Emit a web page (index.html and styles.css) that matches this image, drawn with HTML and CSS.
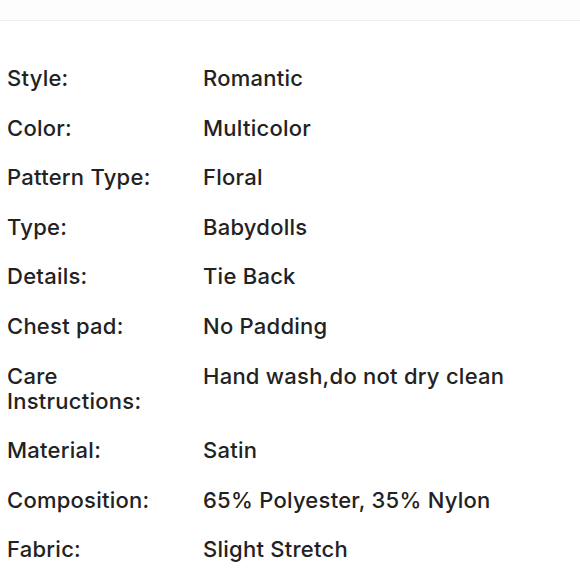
FILE: index.html
```html
<!DOCTYPE html>
<html>
<head>
<meta charset="utf-8">
<link rel="stylesheet" href="styles.css">
</head>
<body>
<div class="topbar"></div>
<dl class="specs">
  <div class="row"><dt>Style:</dt><dd>Romantic</dd></div>
  <div class="row"><dt>Color:</dt><dd>Multicolor</dd></div>
  <div class="row"><dt>Pattern Type:</dt><dd>Floral</dd></div>
  <div class="row"><dt>Type:</dt><dd>Babydolls</dd></div>
  <div class="row"><dt>Details:</dt><dd>Tie Back</dd></div>
  <div class="row"><dt>Chest pad:</dt><dd>No Padding</dd></div>
  <div class="row"><dt>Care Instructions:</dt><dd>Hand wash,do not dry clean</dd></div>
  <div class="row"><dt>Material:</dt><dd>Satin</dd></div>
  <div class="row"><dt>Composition:</dt><dd>65% Polyester, 35% Nylon</dd></div>
  <div class="row"><dt>Fabric:</dt><dd>Slight Stretch</dd></div>
</dl>
</body>
</html>
```
FILE: styles.css
```css
html, body {
  margin: 0;
  padding: 0;
  background: #ffffff;
}
body {
  font-family: Inter, "Noto Sans", "Liberation Sans", sans-serif;
  color: #222222;
  font-size: 22px;
  font-weight: 500;
  line-height: 25px;
  letter-spacing: 0.25px;
}
.topbar {
  height: 20px;
  background: #fdfdfd;
  border-bottom: 1px solid #efefef;
}
.specs {
  margin: 0;
  padding: 45px 0 0 7px;
  display: flex;
  flex-direction: column;
  gap: 24.6px;
}
.row {
  display: flex;
}
.row dt {
  width: 170px;
  margin-right: 26px;
  flex: none;
}
.row dd {
  margin: 0;
}
```
